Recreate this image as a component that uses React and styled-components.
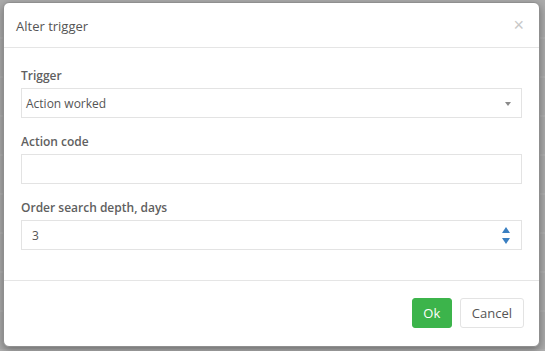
import React from "react";
import styled, { createGlobalStyle } from "styled-components";

const Global = createGlobalStyle`
  html, body {
    margin: 0;
    padding: 0;
    background: #ababab;
    font-family: "Open Sans", "Noto Sans", sans-serif;
  }
  * { box-sizing: border-box; }
`;

const Backdrop = styled.div`
  width: 545px;
  height: 351px;
  padding: 2px 5px 4px 3px;
  background: repeating-linear-gradient(
    to bottom,
    #ababab 0px,
    #ababab 37px,
    #b6b6b6 38px,
    #ababab 39px
  );
  overflow: hidden;
`;

const Modal = styled.div`
  height: 345px;
  background: #fff;
  border: 1px solid #8f8f8f;
  border-radius: 6px;
  box-shadow: 0 3px 9px rgba(0, 0, 0, 0.35);
  display: flex;
  flex-direction: column;
`;

const Header = styled.div`
  height: 45px;
  display: flex;
  align-items: center;
  justify-content: space-between;
  padding: 0 15px 0 12px;
  border-bottom: 1px solid #e5e5e5;
`;

const Title = styled.h4`
  margin: 0 0 -1px 0;
  font-size: 13px;
  font-weight: 400;
  color: #555;
`;

const Close = styled.button`
  border: none;
  background: transparent;
  padding: 0;
  font-size: 18px;
  line-height: 1;
  color: #c8c8c8;
  cursor: pointer;
  font-family: "Liberation Sans", sans-serif;
`;

const Body = styled.div`
  flex: 1;
  padding: 19px 17px 0 17px;
`;

const Group = styled.div`
  margin-bottom: 15px;
`;

const Label = styled.label`
  display: block;
  font-size: 12px;
  font-weight: 600;
  color: #606060;
  line-height: 18px;
  margin-bottom: 3px;
`;

const Field = styled.div`
  position: relative;
  height: 30px;
  border: 1px solid #e3e3e3;
  display: flex;
  align-items: center;
  padding-left: ${(p) => p.$pad || 4}px;
  font-size: 12px;
  color: #555;
`;

const Caret = styled.span`
  position: absolute;
  right: 10px;
  top: 13px;
  width: 0;
  height: 0;
  border-left: 3.5px solid transparent;
  border-right: 3.5px solid transparent;
  border-top: 4px solid #8a8a8a;
`;

const Spinner = styled.div`
  position: absolute;
  right: 11px;
  top: 6px;
  display: flex;
  flex-direction: column;
  gap: 5px;
`;

const Arrow = styled.span`
  width: 0;
  height: 0;
  border-left: 4px solid transparent;
  border-right: 4px solid transparent;
  ${(p) =>
    p.$up
      ? "border-bottom: 6px solid #3a7fc1;"
      : "border-top: 6px solid #3a7fc1;"}
`;

const Footer = styled.div`
  height: 66px;
  border-top: 1px solid #e5e5e5;
  display: flex;
  align-items: center;
  justify-content: flex-end;
  gap: 8px;
  padding: 0 15px 1px 0;
`;

const Button = styled.button`
  height: 30px;
  padding: 0 ${(p) => (p.$primary ? 10 : 11)}px;
  min-width: ${(p) => (p.$primary ? "40px" : "0")};
  border-radius: 3px;
  font-family: "Open Sans", sans-serif;
  font-size: 13px;
  cursor: pointer;
  border: 1px solid ${(p) => (p.$primary ? "#3cb44b" : "#e3e3e3")};
  background: ${(p) => (p.$primary ? "#3cb44b" : "#fff")};
  color: ${(p) => (p.$primary ? "#fff" : "#555")};
`;

export default function App() {
  return (
    <>
      <Global />
      <Backdrop>
        <Modal>
          <Header>
            <Title>Alter trigger</Title>
            <Close>×</Close>
          </Header>
          <Body>
            <Group>
              <Label>Trigger</Label>
              <Field>
                Action worked
                <Caret />
              </Field>
            </Group>
            <Group>
              <Label>Action code</Label>
              <Field />
            </Group>
            <Group>
              <Label>Order search depth, days</Label>
              <Field $pad={10}>
                3
                <Spinner>
                  <Arrow $up />
                  <Arrow />
                </Spinner>
              </Field>
            </Group>
          </Body>
          <Footer>
            <Button $primary>Ok</Button>
            <Button>Cancel</Button>
          </Footer>
        </Modal>
      </Backdrop>
    </>
  );
}
